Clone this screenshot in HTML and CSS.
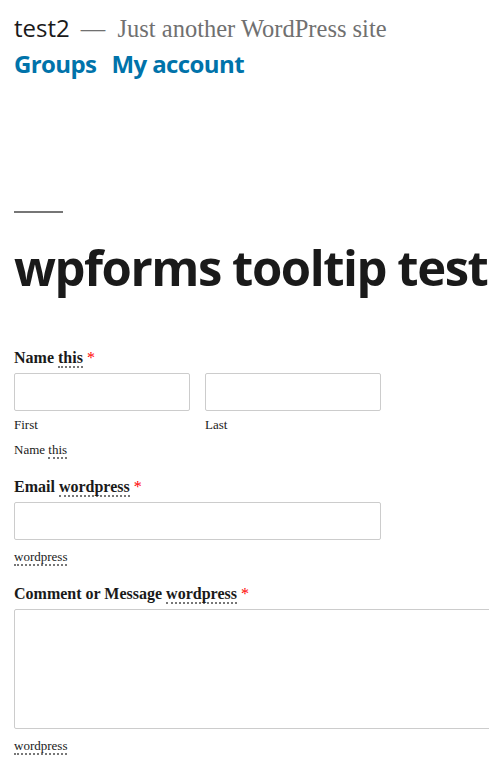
FILE: index.html
```html
<!DOCTYPE html>
<html lang="en">
<head>
<meta charset="utf-8">
<title>wpforms tooltip test – test2</title>
<link rel="stylesheet" href="styles.css">
</head>
<body>
<header class="site-header">
  <div class="branding">
    <span class="site-title">test2</span>
    <span class="site-desc">— &nbsp;Just another WordPress site</span>
  </div>
  <nav class="main-nav">
    <a href="#">Groups</a>
    <a href="#">My account</a>
  </nav>
</header>
<main class="content">
  <hr class="sep">
  <h1 class="entry-title">wpforms tooltip test</h1>
  <form class="wpforms">
    <div class="field">
      <label class="field-label">Name <span class="tip">this</span> <span class="req">*</span></label>
      <div class="row">
        <div class="col">
          <input class="input small" type="text">
          <div class="sublabel">First</div>
        </div>
        <div class="col">
          <input class="input small" type="text">
          <div class="sublabel">Last</div>
        </div>
      </div>
      <div class="desc">Name <span class="tip">this</span></div>
    </div>
    <div class="field">
      <label class="field-label">Email <span class="tip">wordpress</span> <span class="req">*</span></label>
      <input class="input medium" type="email">
      <div class="desc"><span class="tip">wordpress</span></div>
    </div>
    <div class="field">
      <label class="field-label">Comment or Message <span class="tip">wordpress</span> <span class="req">*</span></label>
      <textarea class="textarea"></textarea>
      <div class="desc"><span class="tip">wordpress</span></div>
    </div>
  </form>
</main>
</body>
</html>
```

FILE: styles.css
```css
html, body {
  margin: 0;
  padding: 0;
  background: #fff;
  overflow: hidden;
}
body {
  font-family: "Liberation Serif", serif;
  color: #1a1a1a;
  width: 489px;
}
.site-header {
  padding: 11px 14px 0 14px;
}
.branding {
  display: flex;
  align-items: baseline;
  gap: 11px;
  height: 31px;
}
.site-title {
  font-family: "Open Sans", "DejaVu Sans", sans-serif;
  font-size: 24px;
  color: #1a1a1a;
  letter-spacing: 0;
}
.site-desc {
  font-family: "Liberation Serif", serif;
  font-size: 24.5px;
  color: #707070;
}
.main-nav {
  display: flex;
  gap: 15px;
  margin-top: 5px;
}
.main-nav a {
  font-family: "Open Sans", "DejaVu Sans", sans-serif;
  font-weight: 700;
  font-size: 24px;
  color: #0073aa;
  text-decoration: none;
  letter-spacing: -0.6px;
}
.content {
  padding: 0 14px;
}
.sep {
  width: 49px;
  height: 2px;
  border: 0;
  background: #767676;
  margin: 131px 0 0 0;
}
.entry-title {
  font-family: "Open Sans", "DejaVu Sans", sans-serif;
  font-weight: 700;
  font-size: 49px;
  letter-spacing: -1.45px;
  line-height: 60px;
  margin: 24px 0 0 0;
  color: #1a1a1a;
  white-space: nowrap;
}
.wpforms {
  margin-top: 51px;
}
.field {
  margin-bottom: 19px;
}
.field-label {
  display: block;
  font-weight: 700;
  font-size: 16px;
  line-height: 20px;
  margin-bottom: 5px;
  color: #1a1a1a;
}
.tip {
  border-bottom: 2px dotted #777;
}
.req {
  color: #ff0000;
  font-weight: 400;
}
.row {
  display: flex;
  gap: 15px;
}
.input {
  display: block;
  box-sizing: border-box;
  height: 38px;
  border: 1px solid #ccc;
  border-radius: 2px;
  background: #fff;
  padding: 6px 10px;
  margin: 0;
}
.input.small {
  width: 176px;
}
.input.medium {
  width: 367px;
}
.sublabel {
  font-size: 13px;
  line-height: 16px;
  margin-top: 6px;
  color: #1a1a1a;
}
.desc {
  font-size: 13px;
  line-height: 16px;
  margin-top: 9px;
  color: #1a1a1a;
}
.textarea {
  display: block;
  box-sizing: border-box;
  width: 600px;
  height: 120px;
  border: 1px solid #ccc;
  border-radius: 2px;
  margin: 0;
  resize: none;
}
```
